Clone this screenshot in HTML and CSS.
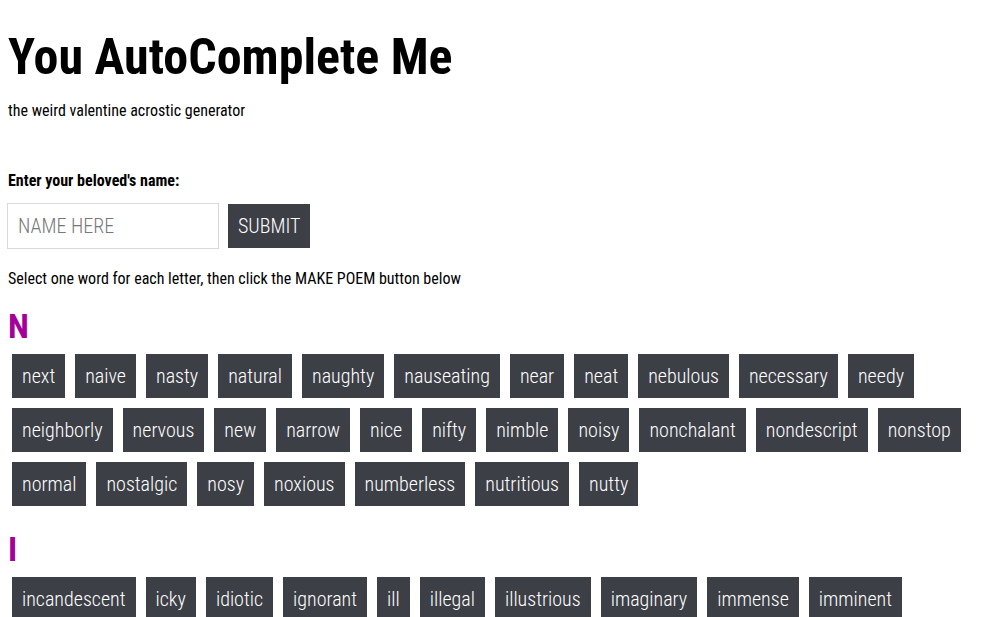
FILE: index.html
```
<!DOCTYPE html>
<html lang="en">
<head>
<meta charset="utf-8">
<title>You AutoComplete Me</title>
<link rel="stylesheet" href="styles.css">
</head>
<body>
<header class="intro">
  <h1 class="title">You AutoComplete Me</h1>
  <p class="tagline">the weird valentine acrostic generator</p>
</header>
<form class="name-form">
  <label class="name-label" for="name">Enter your beloved's name:</label>
  <div class="name-row">
    <input class="name-input" id="name" type="text" placeholder="NAME HERE">
    <button class="submit-btn" type="button">SUBMIT</button>
  </div>
</form>
<p class="instructions">Select one word for each letter, then click the MAKE POEM button below</p>

<section class="letter-group">
  <h2 class="letter">N</h2>
  <div class="words">
    <span class="word">next</span><span class="word">naive</span><span class="word">nasty</span><span class="word">natural</span><span class="word">naughty</span><span class="word">nauseating</span><span class="word">near</span><span class="word">neat</span><span class="word">nebulous</span><span class="word">necessary</span><span class="word">needy</span><span class="word">neighborly</span><span class="word">nervous</span><span class="word">new</span><span class="word">narrow</span><span class="word">nice</span><span class="word">nifty</span><span class="word">nimble</span><span class="word">noisy</span><span class="word">nonchalant</span><span class="word">nondescript</span><span class="word">nonstop</span><span class="word">normal</span><span class="word">nostalgic</span><span class="word">nosy</span><span class="word">noxious</span><span class="word">numberless</span><span class="word">nutritious</span><span class="word">nutty</span>
  </div>
</section>

<section class="letter-group">
  <h2 class="letter">I</h2>
  <div class="words">
    <span class="word">incandescent</span><span class="word">icky</span><span class="word">idiotic</span><span class="word">ignorant</span><span class="word">ill</span><span class="word">illegal</span><span class="word">illustrious</span><span class="word">imaginary</span><span class="word">immense</span><span class="word">imminent</span>
  </div>
</section>
</body>
</html>
```
FILE: styles.css
```
html, body {
  margin: 0;
  padding: 0;
  background: #ffffff;
}

body {
  padding: 0 8px;
  font-family: "Roboto Condensed", "Roboto", "Liberation Sans Narrow", sans-serif;
  font-stretch: condensed;
  color: #000;
}

.title {
  margin: 0;
  padding-top: 27px;
  font-size: 50px;
  line-height: 60px;
  font-weight: 700;
}

.tagline {
  margin: 14px 0 0;
  font-size: 16px;
  line-height: 20px;
}

.name-form {
  margin-top: 50px;
}

.name-label {
  display: block;
  font-size: 16px;
  font-weight: 700;
  line-height: 20px;
}

.name-row {
  display: flex;
  align-items: flex-start;
  gap: 9px;
  margin-top: 12px;
  margin-left: -1px;
}

.name-input {
  box-sizing: border-box;
  width: 212px;
  height: 46px;
  padding: 0 10px;
  border: 1px solid #d9d9d9;
  font-family: inherit;
  font-stretch: condensed;
  font-size: 20px;
  font-weight: 300;
  color: #333;
  outline: none;
}

.name-input::placeholder {
  color: #777;
}

.submit-btn {
  height: 44px;
  margin-top: 1px;
  padding: 0 10px;
  border: none;
  background: #3d3f47;
  color: #fff;
  font-family: inherit;
  font-stretch: condensed;
  font-size: 20px;
  font-weight: 300;
}

.instructions {
  margin: 20px 0 0;
  font-size: 16px;
  line-height: 20px;
}

.letter-group {
  margin-top: 17px;
}

.letter-group + .letter-group {
  margin-top: 23px;
}

.letter {
  margin: 0;
  font-size: 34px;
  line-height: 40px;
  font-weight: 700;
  color: #a4009a;
}

.words {
  display: flex;
  flex-wrap: wrap;
  gap: 10px;
  padding-left: 4px;
  margin-top: 8px;
}

.word {
  display: block;
  padding: 10px;
  background: #3d3f47;
  color: #fff;
  font-size: 20px;
  font-weight: 300;
  line-height: 24px;
}
```
